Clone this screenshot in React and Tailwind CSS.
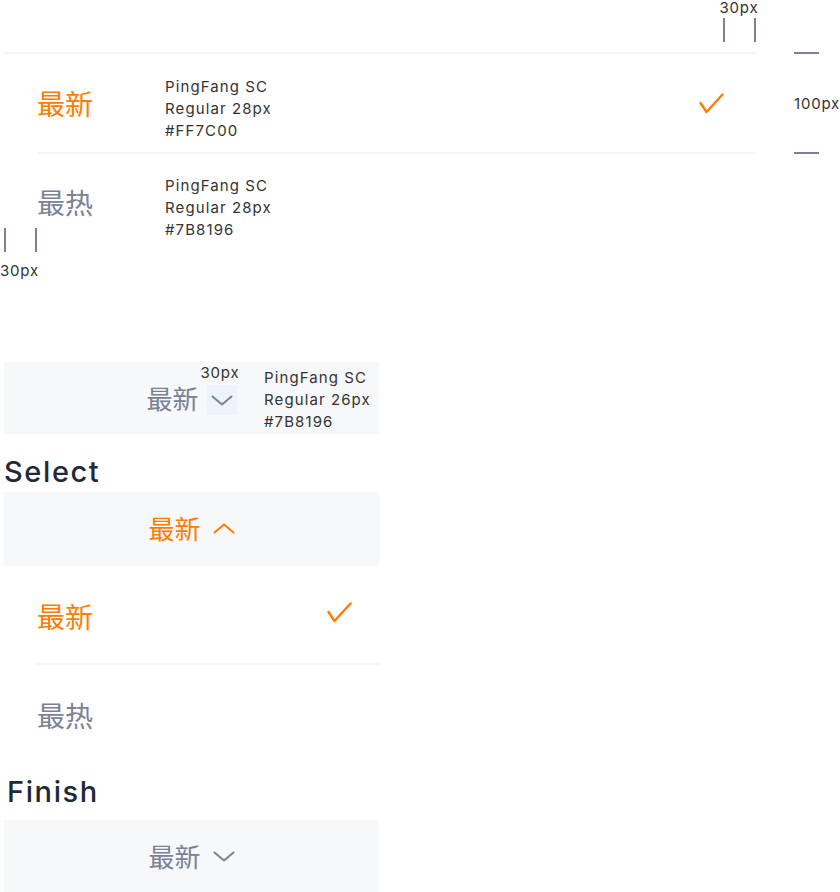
import React from "react";

const ORANGE = "#FF7C00";
const latin = { fontFamily: 'Inter, "Noto Sans", sans-serif' };

function Check({ className = "" }) {
  return (
    <svg className={className} width="25" height="21" viewBox="0 0 25 21" fill="none">
      <polyline points="1.5,10 7.5,19 23.5,1.5" stroke={ORANGE} strokeWidth="2.4" strokeLinecap="round" strokeLinejoin="round" />
    </svg>
  );
}

function Chevron({ up = false, color = "#7B8196" }) {
  return (
    <svg width="22" height="11" viewBox="0 0 22 11" fill="none">
      <polyline
        points={up ? "1.5,9.5 11,1.5 20.5,9.5" : "1.5,1.5 11,9.5 20.5,1.5"}
        stroke={color}
        strokeWidth="2"
        strokeLinecap="round"
        strokeLinejoin="round"
      />
    </svg>
  );
}

function Note({ lines, className = "" }) {
  return (
    <div className={"text-[15px] leading-[22px] tracking-[1.1px] text-[#333] " + className} style={latin}>
      {lines.map((l) => (
        <div key={l}>{l}</div>
      ))}
    </div>
  );
}

function Px({ children, className = "" }) {
  return (
    <div className={"text-[15px] leading-[16px] tracking-[0.8px] text-[#333] " + className} style={latin}>
      {children}
    </div>
  );
}

export default function App() {
  const font = { fontFamily: '"Noto Sans CJK SC", "Noto Sans", sans-serif' };
  return (
    <div className="relative w-[840px] h-[892px] bg-white overflow-hidden" style={font}>
      {/* Section A: dropdown spec */}
      <div className="relative">
        <div className="h-[52px] flex justify-end pr-[81px]">
          <div className="flex flex-col items-center w-[40px]">
            <Px className="mt-[0px]">30px</Px>
            <div className="flex justify-between w-[33px] mt-[2px]">
              <div className="w-[2px] h-[24px] bg-[#7B8196]" />
              <div className="w-[2px] h-[24px] bg-[#7B8196]" />
            </div>
          </div>
        </div>

        <div className="flex">
          <div className="ml-[4px] w-[752px]">
            <div className="h-[100px] border-t-2 border-[#f4f5f7] flex items-center pl-[33px] pr-[32px]">
              <span className="text-[28px] leading-none w-[128px]" style={{ color: ORANGE }}>最新</span>
              <Note className="mt-[12px]" lines={["PingFang SC", "Regular 28px", "#FF7C00"]} />
              <Check className="ml-auto" />
            </div>
            <div className="ml-[33px] h-[2px] bg-[#f4f5f7]" />
            <div className="relative h-[98px] flex items-center pl-[33px]">
              <span className="text-[28px] leading-none w-[128px] text-[#7B8196] -mt-[2px]">最热</span>
              <Note className="mt-[10px]" lines={["PingFang SC", "Regular 28px", "#7B8196"]} />
              <div className="absolute left-0 bottom-[0px] flex justify-between w-[33px]">
                <div className="w-[2px] h-[24px] bg-[#7B8196]" />
                <div className="w-[2px] h-[24px] bg-[#7B8196]" />
              </div>
            </div>
          </div>
          <div className="ml-[38px] relative w-[46px] h-[102px]">
            <div className="w-[25px] h-[2px] bg-[#7B8196]" />
            <Px className="mt-[42px]">100px</Px>
            <div className="w-[25px] h-[2px] bg-[#7B8196] mt-[40px]" />
          </div>
        </div>
        <Px className="mt-[11px]">30px</Px>
      </div>

      {/* Section B: trigger spec */}
      <div className="mt-[83px] ml-[4px] w-[375px] h-[72px] bg-[#f7f8fa] relative flex items-center justify-center">
        <div className="flex items-center gap-[8px]">
          <span className="text-[26px] leading-none text-[#7B8196]">最新</span>
          <div className="relative w-[30px] h-[30px] bg-[#eef3fb] flex items-center justify-center mt-[4px]">
            <Chevron />
            <Px className="absolute -top-[20px] -left-[6px]">30px</Px>
          </div>
        </div>
        <Note className="absolute left-[260px] top-[5px]" lines={["PingFang SC", "Regular 26px", "#7B8196"]} />
      </div>

      {/* Select */}
      <div className="ml-[4px] mt-[20px] text-[29px] leading-[36px] font-medium tracking-[1.6px] text-[#1f2937]" style={latin}>
        Select
      </div>
      <div className="ml-[4px] mt-[2px] w-[375px]">
        <div className="h-[72px] bg-[#f7f8fa] shadow-[0_2px_3px_rgba(0,0,0,0.04)] flex items-center justify-center gap-[12px]">
          <span className="text-[26px] leading-none" style={{ color: ORANGE }}>最新</span>
          <Chevron up color={ORANGE} />
        </div>
        <div className="h-[99px] flex items-center pl-[33px] pr-[27px]">
          <span className="text-[28px] leading-none mt-[4px]" style={{ color: ORANGE }}>最新</span>
          <Check className="ml-auto -mt-[2px]" />
        </div>
        <div className="ml-[33px] h-[2px] bg-[#f4f5f7]" />
        <div className="h-[99px] flex items-center pl-[33px]">
          <span className="text-[28px] leading-none text-[#7B8196]">最热</span>
        </div>
      </div>

      {/* Finish */}
      <div className="ml-[7px] mt-[10px] text-[29px] leading-[36px] font-medium tracking-[1.6px] text-[#1f2937]" style={latin}>
        Finish
      </div>
      <div className="ml-[4px] mt-[10px] w-[375px] h-[72px] bg-[#f7f8fa] flex items-center justify-center gap-[12px]">
        <span className="text-[26px] leading-none text-[#7B8196]">最新</span>
        <Chevron />
      </div>
    </div>
  );
}
